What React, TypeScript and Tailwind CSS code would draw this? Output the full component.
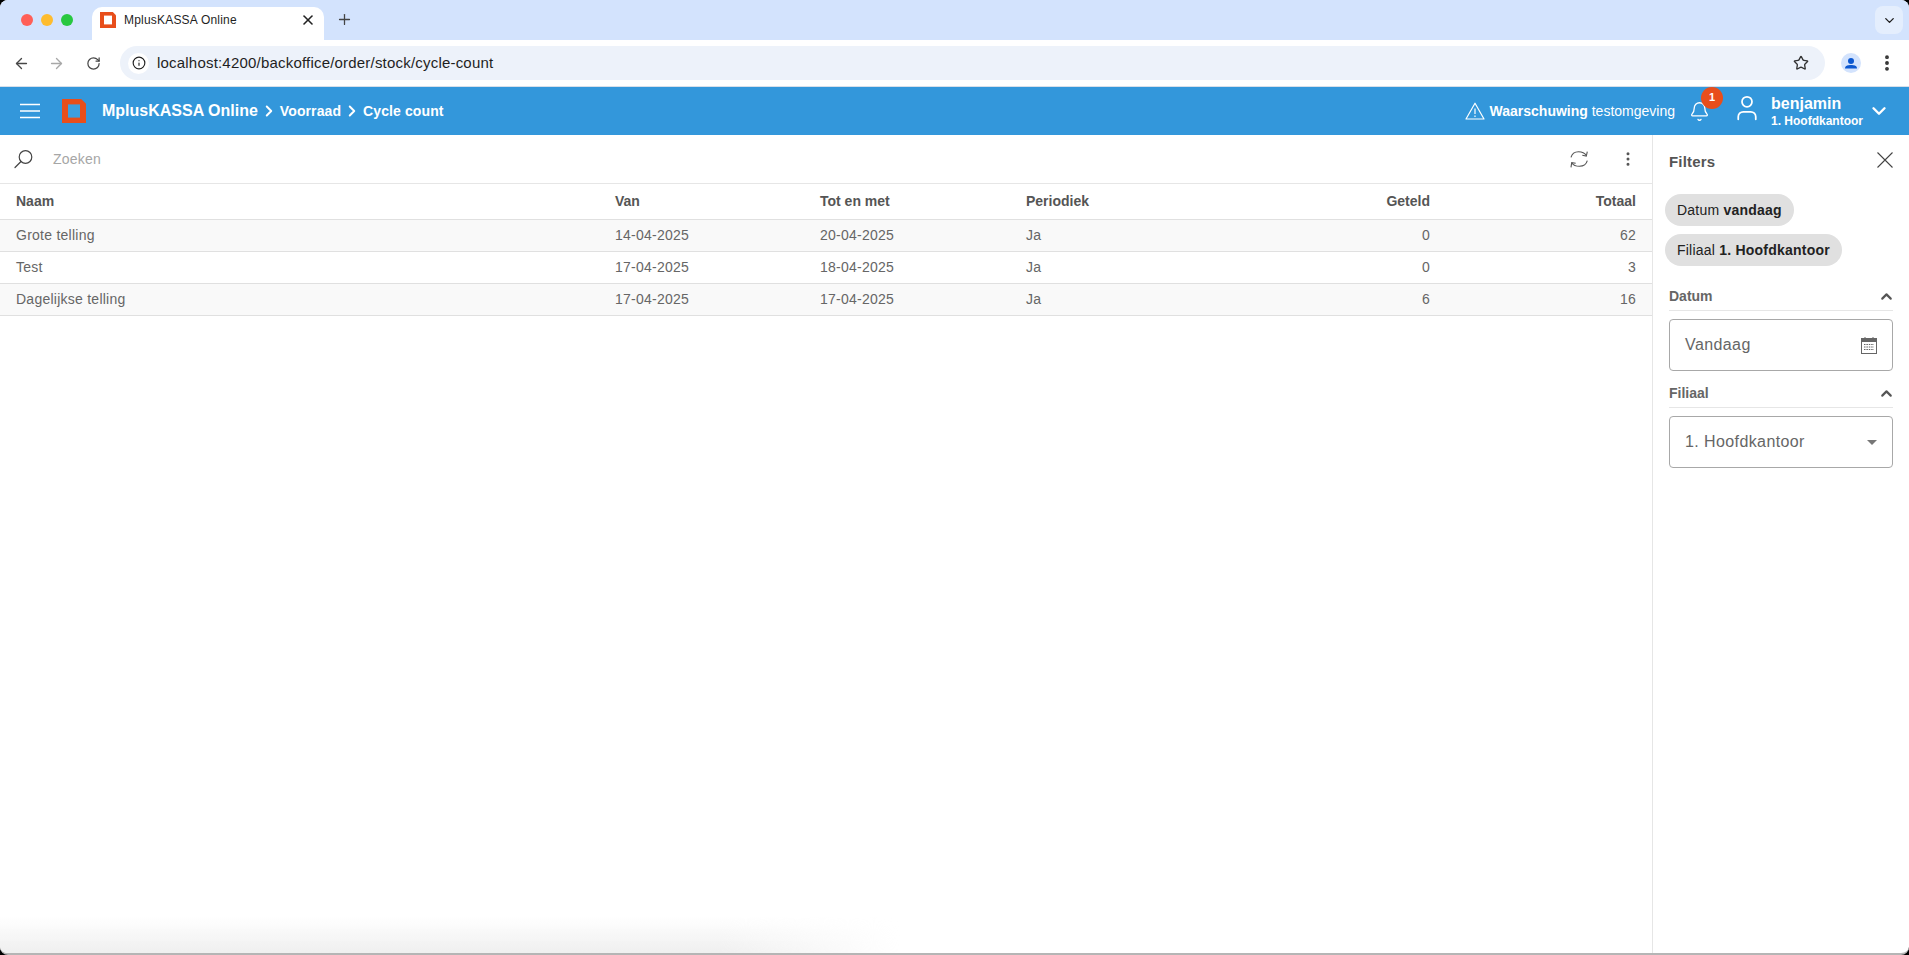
import React from 'react';
import { ArrowLeft, ArrowRight, RotateCw, Info, Star, EllipsisVertical, ChevronDown, ChevronUp, ChevronRight, Plus, X, Bell, User } from 'lucide-react';

const rows = [
  { naam: 'Grote telling', van: '14-04-2025', tot: '20-04-2025', periodiek: 'Ja', geteld: 0, totaal: 62, striped: true },
  { naam: 'Test', van: '17-04-2025', tot: '18-04-2025', periodiek: 'Ja', geteld: 0, totaal: 3, striped: false },
  { naam: 'Dagelijkse telling', van: '17-04-2025', tot: '17-04-2025', periodiek: 'Ja', geteld: 6, totaal: 16, striped: true },
];

const gridCols = 'grid grid-cols-[599px_205px_206px_206px_198px_206px] pl-4 items-center';

const Logo = ({ size, inner }: { size: number; inner: string }) => (
  <svg width={size} height={size} viewBox="0 0 20 20">
    <path d="M0 0H16L20 4V20H0Z" fill="#e84e1b" />
    <rect x="5" y="4.5" width="10" height="11" fill={inner} />
  </svg>
);

function BrowserChrome() {
  return (
    <>
      {/* tab strip */}
      <div className="h-10 bg-[#d3e3fd] flex items-end shrink-0">
        <div className="flex items-center gap-2 w-[92px] pl-[21px] h-10">
          <span className="w-3 h-3 rounded-full bg-[#ff5f57]" />
          <span className="w-3 h-3 rounded-full bg-[#febc2e]" />
          <span className="w-3 h-3 rounded-full bg-[#28c840]" />
        </div>
        <div className="w-[232px] h-[33px] bg-white rounded-t-[10px] flex items-center pl-2 pr-2 pb-[7px] text-[#1f1f1f] text-[12px] tracking-[0.2px]">
          <Logo size={16} inner="#ffffff" />
          <span className="ml-2 flex-1">MplusKASSA Online</span>
          <X size={16} strokeWidth={2.4} className="text-[#222]" />
        </div>
        <div className="w-10 h-10 flex items-center justify-center pb-[1px]">
          <Plus size={17} strokeWidth={1.8} className="text-[#444]" />
        </div>
        <div className="flex-1" />
        <div className="w-7 h-7 rounded-[8px] bg-[#e4eefd] flex items-center justify-center mr-[6px] mb-[6px]">
          <ChevronDown size={15} strokeWidth={2.2} className="text-[#222]" />
        </div>
      </div>
      {/* address bar */}
      <div className="h-[47px] bg-white flex items-center shrink-0 border-b border-[#d6dfea]">
        <div className="w-[120px] pl-[13px] flex items-center shrink-0">
          <ArrowLeft size={17} strokeWidth={1.9} className="text-[#474747]" />
          <ArrowRight size={17} strokeWidth={1.9} className="text-[#a8a8a8] ml-[18px]" />
          <RotateCw size={15} strokeWidth={2} className="text-[#474747] ml-[21px]" />
        </div>
        <div className="flex-1 h-[34px] bg-[#edf2fa] rounded-full flex items-center pl-2 text-[15px] text-[#1f1f1f]">
          <span className="w-[21px] h-[21px] flex items-center justify-center rounded-full bg-white mr-2">
            <Info size={14} strokeWidth={2} className="text-[#222]" />
          </span>
          <span className="tracking-[0.2px]">localhost:4200/backoffice/order/stock/cycle-count</span>
          <div className="flex-1" />
          <Star size={16} strokeWidth={2} className="text-[#333] mr-4" />
        </div>
        <div className="w-[84px] flex items-center shrink-0 pl-4">
          <svg width="20" height="20" viewBox="0 0 20 20">
            <circle cx="10" cy="10" r="10" fill="#d3e3fd" />
            <circle cx="10" cy="8" r="3" fill="#0b57d0" />
            <path d="M4 15.5C4 12.5 7 12 10 12S16 12.5 16 15.5Z" fill="#0b57d0" />
          </svg>
          <EllipsisVertical size={20} strokeWidth={2.6} className="text-[#333] ml-4" />
        </div>
      </div>
    </>
  );
}

function AppHeader() {
  return (
    <div className="h-12 bg-[#3397db] text-white flex items-center shrink-0">
      <svg width="20" height="16" viewBox="0 0 20 16" stroke="#fff" strokeWidth="1.5" className="ml-[20px]">
        <path d="M0 1.5H20M0 8H20M0 14.5H20" />
      </svg>
      <div className="ml-[22px]"><Logo size={24} inner="#3d9fe0" /></div>
      <span className="ml-4 text-[16px] font-bold">MplusKASSA Online</span>
      <ChevronRight size={18} strokeWidth={2.6} className="ml-[2px]" />
      <span className="ml-[2px] text-[14px] font-bold tracking-[0.1px]">Voorraad</span>
      <ChevronRight size={18} strokeWidth={2.6} className="ml-[2px]" />
      <span className="ml-[2px] text-[14px] font-bold tracking-[0.1px]">Cycle count</span>
      <div className="flex-1" />
      <svg width="20" height="18" viewBox="0 0 20 18" fill="none" stroke="#fff" strokeWidth="1.2">
        <path d="M10 1.2L19 17H1Z" strokeLinejoin="round" />
        <path d="M10 6.5V12M10 13.6V15" />
      </svg>
      <span className="ml-[5px] text-[14px]"><b>Waarschuwing</b> testomgeving</span>
      <div className="relative ml-[13px] w-[22px] flex justify-center">
        <Bell size={21} strokeWidth={1.5} />
        <span className="absolute -top-[14px] left-[13px] w-[22px] h-[22px] rounded-full bg-[#e84e1b] text-[11px] font-bold flex items-center justify-center">1</span>
      </div>
      <User size={30} strokeWidth={1.4} className="ml-[22px] -mt-[6px]" />
      <div className="ml-[9px] flex flex-col">
        <span className="text-[16px] font-bold leading-[20px]">benjamin</span>
        <span className="text-[12px] font-bold leading-[14px]">1. Hoofdkantoor</span>
      </div>
      <ChevronDown size={22} strokeWidth={2.6} className="ml-[5px] mr-[19px]" />
    </div>
  );
}

function OrderTable() {
  return (
    <div className="flex-1 flex flex-col min-w-0">
      <div className="h-[49px] flex items-center border-b border-[#e6e6e6] shrink-0">
        <svg width="20" height="20" viewBox="0 0 20 20" fill="none" stroke="#444" strokeWidth="1.2" className="ml-[14px]">
          <circle cx="11.5" cy="8" r="6.3" />
          <path d="M7 12.5L1 18.5" strokeLinecap="round" />
        </svg>
        <span className="ml-[19px] text-[14px] text-[#a6a6a6] tracking-[0.2px]">Zoeken</span>
        <div className="flex-1" />
        <svg width="20" height="20" viewBox="0 0 20 20" fill="none" stroke="#555" strokeWidth="1.1" className="mr-[30px]">
          <path d="M2 8.3C3 4.5 6 2.7 9.5 2.7C13 2.7 15.8 4 17.3 6.5" />
          <path d="M18.3 2.7L17.3 7L13.3 6.3" />
          <path d="M18.3 11.7C17.3 15.5 14 17.3 10.5 17.3C7 17.3 4.2 16 2.7 13.7" />
          <path d="M2 18.3L2.7 13.7L6.7 14.3" />
        </svg>
        <EllipsisVertical size={18} strokeWidth={2} className="text-[#555] mr-[15px]" />
      </div>
      <div className={`${gridCols} h-9 border-b border-[#e0e0e0] text-[14px] font-bold text-[#555555] shrink-0`}>
        <span>Naam</span>
        <span>Van</span>
        <span>Tot en met</span>
        <span>Periodiek</span>
        <span className="text-right">Geteld</span>
        <span className="text-right">Totaal</span>
      </div>
      {rows.map((r) => (
        <div key={r.naam} className={`${gridCols} h-8 border-b border-[#e0e0e0] text-[14px] text-[#666666] tracking-[0.25px] shrink-0 ${r.striped ? 'bg-[#f9f9f9]' : 'bg-white'}`}>
          <span>{r.naam}</span>
          <span>{r.van}</span>
          <span>{r.tot}</span>
          <span>{r.periodiek}</span>
          <span className="text-right">{r.geteld}</span>
          <span className="text-right">{r.totaal}</span>
        </div>
      ))}
    </div>
  );
}

function FiltersPanel() {
  return (
    <div className="w-[257px] shrink-0 border-l border-[#e6e6e6] flex flex-col pl-4 pr-4">
      <div className="h-[49px] flex items-center justify-between shrink-0">
        <span className="text-[15px] font-bold text-[#555555] tracking-[0.2px] mt-[5px]">Filters</span>
        <svg width="16" height="16" viewBox="0 0 16 16" stroke="#444" strokeWidth="1.1">
          <path d="M0.5 0.5L15.5 15.5M15.5 0.5L0.5 15.5" />
        </svg>
      </div>
      <div className="flex flex-col items-start gap-2 -ml-[4px] mt-[10px]">
        <span className="h-8 px-3 rounded-full bg-[#e0e0e0] text-[14px] text-[#222] tracking-[0.22px] flex items-center">Datum&nbsp;<b>vandaag</b></span>
        <span className="h-8 px-3 rounded-full bg-[#e0e0e0] text-[14px] text-[#222] tracking-[0.22px] flex items-center">Filiaal&nbsp;<b>1. Hoofdkantoor</b></span>
      </div>
      <div className="mt-[13px] h-8 pt-[3px] flex items-center justify-between border-b border-[#e6e6e6] text-[14px] font-bold text-[#666666]">
        <span>Datum</span>
        <ChevronUp size={17} strokeWidth={3} className="text-[#555] -mr-[2px]" />
      </div>
      <div className="mt-2 h-[52px] rounded-[4px] border border-[#a8a8a8] flex items-center justify-between px-[15px] text-[16px] text-[#666666] tracking-[0.4px]">
        <span>Vandaag</span>
        <svg width="16" height="17" viewBox="0 0 16 17">
          <rect x="0.5" y="1.5" width="15" height="15" fill="none" stroke="#666" />
          <rect x="0.5" y="1.5" width="15" height="3.5" fill="#666" />
          <path d="M4 0V3M12 0V3" stroke="#666" />
          <path d="M3 7.5H13M3 10H13M3 12.5H13" stroke="#666" strokeDasharray="1.5 0.9" />
        </svg>
      </div>
      <div className="mt-[5px] h-8 pt-[3px] flex items-center justify-between border-b border-[#e6e6e6] text-[14px] font-bold text-[#666666]">
        <span>Filiaal</span>
        <ChevronUp size={17} strokeWidth={3} className="text-[#555] -mr-[2px]" />
      </div>
      <div className="mt-2 h-[52px] rounded-[4px] border border-[#a8a8a8] flex items-center justify-between px-[15px] text-[16px] text-[#666666] tracking-[0.4px]">
        <span>1. Hoofdkantoor</span>
        <span className="w-0 h-0 border-l-[5px] border-r-[5px] border-t-[5px] border-l-transparent border-r-transparent border-t-[#777]" />
      </div>
    </div>
  );
}

export default function App() {
  return (
    <div className="w-[1909px] h-[955px] bg-black font-[Liberation_Sans,Arial,sans-serif] overflow-hidden">
      <div className="w-full h-full rounded-[8px] overflow-hidden bg-white flex flex-col relative border-b-2 border-[#b5b5b5]">
        <BrowserChrome />
        <AppHeader />
        <div className="flex-1 flex min-h-0">
          <OrderTable />
          <FiltersPanel />
        </div>
        <div className="absolute left-0 bottom-0 w-[900px] h-9 bg-gradient-to-t from-[#efefef] to-transparent [mask-image:linear-gradient(to_right,black_80%,transparent)] pointer-events-none" />
      </div>
    </div>
  );
}
